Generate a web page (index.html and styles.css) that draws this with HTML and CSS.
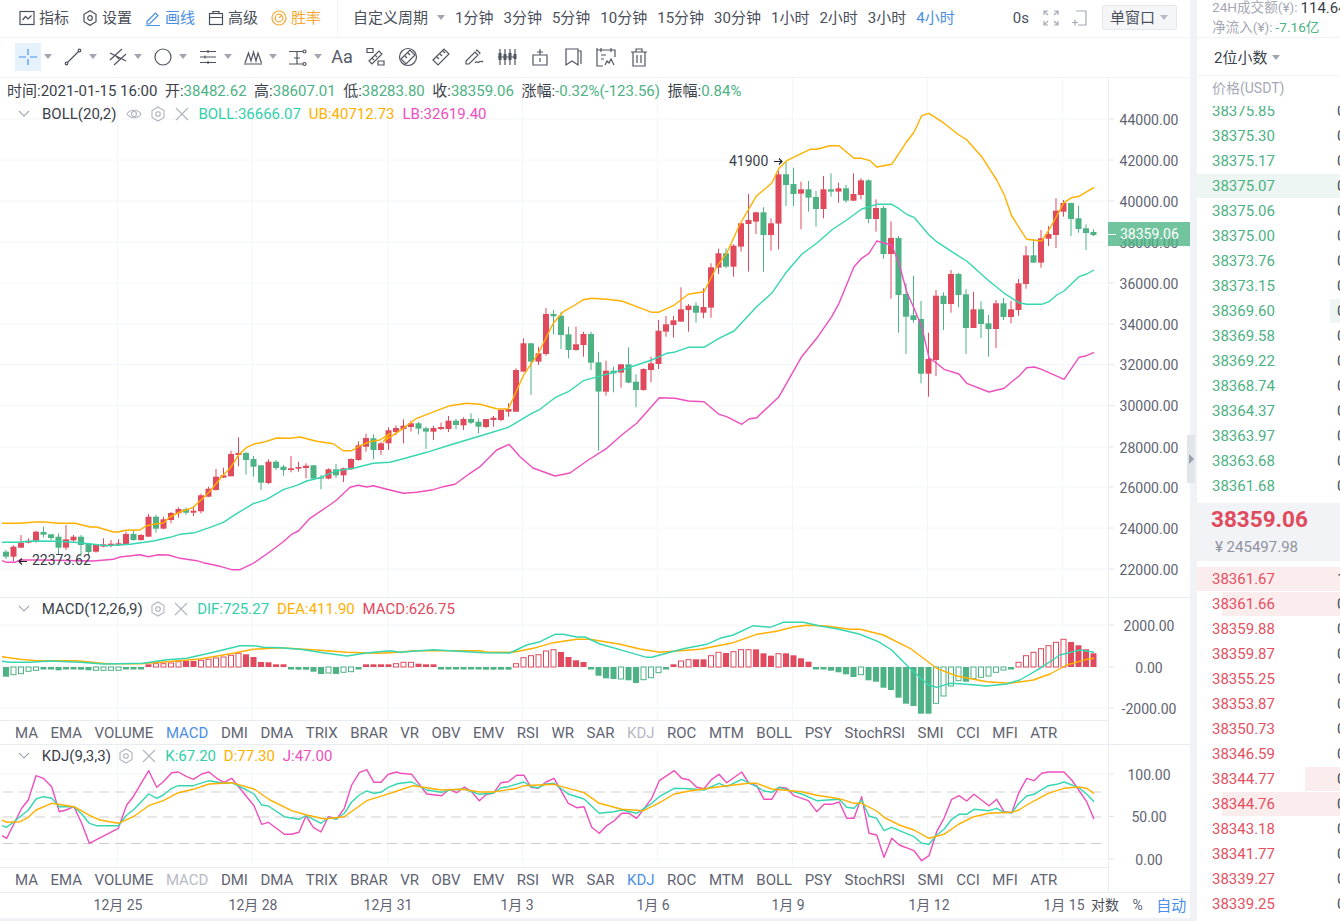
FILE: index.html
```html
<!DOCTYPE html>
<html lang="zh">
<head>
<meta charset="utf-8">
<title>K线</title>
<link rel="stylesheet" href="styles.css">
</head>
<body>
<div class="app">
  <div class="main">
    <div class="bar-top">
      <div class="bar-tools">
        <div class="tb-item"><svg class="ico" viewBox="0 0 16 16"><rect x="1" y="1.500" width="14" height="13"/><path d="M3.500 10l3-3.500 2.500 2.500 3.500-3.500"/></svg>指标</div>
        <div class="tb-item"><svg class="ico" viewBox="0 0 16 16"><path d="M8 .8l6 3.500v7.400l-6 3.500-6-3.500V4.300z"/><circle cx="8" cy="8" r="2.300"/></svg>设置</div>
        <div class="tb-item blue"><svg class="ico" viewBox="0 0 16 16"><path d="M2 11.500L10.500 3l2.500 2.500L4.500 14H2zM1 15.500h14"/></svg>画线</div>
        <div class="tb-item"><svg class="ico" viewBox="0 0 16 16"><rect x="1.500" y="3.500" width="13" height="11"/><path d="M1.500 7.500h13M5 3.500V1.500h6v2"/></svg>高级</div>
        <div class="tb-item orange"><svg class="ico" viewBox="0 0 16 16"><circle cx="8" cy="8" r="7"/><circle cx="8" cy="8" r="3.800"/><path d="M8 8l3-3"/></svg>胜率</div>
      </div>
      <div class="bar-periods">
        <div class="period-custom">自定义周期<i class="caret"></i></div>
        <span>1分钟</span><span>3分钟</span><span>5分钟</span><span>10分钟</span><span>15分钟</span><span>30分钟</span><span>1小时</span><span>2小时</span><span>3小时</span><span class="blue">4小时</span>
      </div>
      <div class="bar-right">
        <span class="clock">0s</span>
        <svg class="ico ico-gray" viewBox="0 0 16 16"><path d="M1 5V1h4M11 1h4v4M15 11v4h-4M5 15H1v-4M1 1l4 4M15 1l-4 4M15 15l-4-4M1 15l4-4"/></svg>
        <svg class="ico ico-gray" viewBox="0 0 16 16"><path d="M5 1h10v14H7M1 12.500h6M4 9.500v6"/></svg>
        <div class="window-btn">单窗口<i class="caret caret-light"></i></div>
      </div>
    </div>
    <div class="bar-draw">
      <div class="tool-group"><span class="tool tool-on"><svg class="ico ico-big" viewBox="0 0 20 20"><path d="M10 2v6M10 12v6M1 10h7M12 10h7"/></svg></span><i class="caret"></i></div>
      <div class="tool-group"><span class="tool"><svg class="ico ico-big" viewBox="0 0 20 20"><path d="M4.500 15.500l11-11"/><circle cx="3.500" cy="16.500" r="1.300"/><circle cx="16.500" cy="3.500" r="1.300"/></svg></span><i class="caret"></i></div>
      <div class="tool-group"><span class="tool"><svg class="ico ico-big" viewBox="0 0 20 20"><path d="M2 13L14 2M6 18L18 7M2 6l16 8M7 8l4 4"/></svg></span><i class="caret"></i></div>
      <div class="tool-group"><span class="tool"><svg class="ico ico-big" viewBox="0 0 20 20"><circle cx="10" cy="10" r="8"/></svg></span><i class="caret"></i></div>
      <div class="tool-group"><span class="tool"><svg class="ico ico-big" viewBox="0 0 20 20"><path d="M2 4.500h16M2 10h16M2 15.500h16M10 3v3M7 8.500v3M10 14v3"/></svg></span><i class="caret"></i></div>
      <div class="tool-group"><span class="tool"><svg class="ico ico-big" viewBox="0 0 20 20"><path d="M1 17h18M2 16L5.500 6 8 14l2.500-9 2.500 9L15 6l3.500 10"/></svg></span><i class="caret"></i></div>
      <div class="tool-group tool-group-last"><span class="tool"><svg class="ico ico-big" viewBox="0 0 20 20"><path d="M1 4.500h14M1 17h14M9 4.500V17M6 11h6"/><circle cx="16.500" cy="4.500" r="1.500"/><circle cx="16.500" cy="17" r="1.500"/></svg></span><i class="caret"></i></div>
      <span class="tool-single tool-text">Aa</span>
      <span class="tool-single"><svg class="ico ico-big" viewBox="0 0 20 20"><path d="M2 1.500h6v4H2zM13 14h6v4h-6zM4 14l10-10 3 3L7 17zM7 11l2 2M10 8l2 2"/></svg></span>
      <span class="tool-single"><svg class="ico ico-big" viewBox="0 0 20 20"><path d="M3 12L12 3l5 5-9 9zM7 9l2 2M10 6l2 2"/><circle cx="10" cy="10" r="8.500"/></svg></span>
      <span class="tool-single"><svg class="ico ico-big" viewBox="0 0 20 20"><path d="M2 13L13 2l5 5L7 18zM6 10l2 2M9 7l2 2M12 4l2 2"/></svg></span>
      <span class="tool-single"><svg class="ico ico-big" viewBox="0 0 20 20"><path d="M2 17v-3L11 5l3 3-9 9zM12 4l1-1 3 3-1 1M11 16c2-3 3 1 4-1s2 1 4-1"/></svg></span>
      <span class="tool-single"><svg class="ico ico-big" viewBox="0 0 20 20"><path d="M3 2v16M8 2v16M13 2v16M18 2v16M1 10h18"/><path class="ico-fill" d="M1.500 6h3v7h-3zM6.500 7h3v6h-3zM11.500 6h3v7h-3zM16.500 7h3v5h-3z"/></svg></span>
      <span class="tool-single"><svg class="ico ico-big" viewBox="0 0 20 20"><path d="M3 8h14v10H3zM10 8V2M7 5h6M10 11v4"/></svg></span>
      <span class="tool-single"><svg class="ico ico-big" viewBox="0 0 20 20"><path d="M3 2h12v16l-6-4-6 4zM15 4h3v13"/></svg></span>
      <span class="tool-single"><svg class="ico ico-big" viewBox="0 0 20 20"><path d="M1 1v18h6M1 3h18v7M5 1v4M15 1v4M5 8h5M5 12h3M9 18l2-4 2 2 2-4 3 6"/></svg></span>
      <span class="tool-single"><svg class="ico ico-big" viewBox="0 0 20 20"><path d="M2 5h16M7 5V2h6v3M4 5v14h12V5M8 8v8M12 8v8"/></svg></span>
    </div>

    <div class="pane pane-main">
      <div class="plot">
        <svg id="main-plot" class="chart-svg" width="1108" height="519" viewBox="0 78 1108 519"></svg>
        <div class="legend">
          <div class="info">
            <span>时间:2021-01-15 16:00</span>
            <span>开:<b>38482.62</b></span>
            <span>高:<b>38607.01</b></span>
            <span>低:<b>38283.80</b></span>
            <span>收:<b>38359.06</b></span>
            <span>涨幅:<b>-0.32%(-123.56)</b></span>
            <span>振幅:<b>0.84%</b></span>
          </div>
          <div class="ind">
            <svg class="chev" viewBox="0 0 12 8"><path d="M1 1l5 5 5-5"/></svg>
            <span class="ind-name">BOLL(20,2)</span>
            <svg class="mini" viewBox="0 0 16 16"><path d="M1 8c3-5 11-5 14 0-3 5-11 5-14 0z"/><circle cx="8" cy="8" r="2.500"/></svg>
            <svg class="mini" viewBox="0 0 16 16"><path d="M8 1l6 3.500v7L8 15l-6-3.500v-7z"/><circle cx="8" cy="8" r="2.300"/></svg>
            <svg class="mini" viewBox="0 0 16 16"><path d="M2 2l12 12M14 2L2 14"/></svg>
            <span class="teal">BOLL:36666.07</span><span class="amber">UB:40712.73</span><span class="pink">LB:32619.40</span>
          </div>
        </div>
      </div>
      <div class="axis">
        <svg id="main-axis" class="chart-svg" width="81" height="519" viewBox="1109 78 81 519"></svg>
        <div class="price-tag"><i class="tag-dash"></i>38359.06</div>
      </div>
    </div>

    <div class="pane pane-sub">
      <div class="plot">
        <svg id="macd-plot" class="chart-svg plot-sub" width="1108" height="122" viewBox="0 598 1108 122"></svg>
        <div class="legend legend-sub">
          <div class="ind">
            <svg class="chev" viewBox="0 0 12 8"><path d="M1 1l5 5 5-5"/></svg>
            <span class="ind-name">MACD(12,26,9)</span>
            <svg class="mini" viewBox="0 0 16 16"><path d="M8 1l6 3.500v7L8 15l-6-3.500v-7z"/><circle cx="8" cy="8" r="2.300"/></svg>
            <svg class="mini" viewBox="0 0 16 16"><path d="M2 2l12 12M14 2L2 14"/></svg>
            <span class="teal">DIF:725.27</span><span class="amber">DEA:411.90</span><span class="red">MACD:626.75</span>
          </div>
        </div>
        <div class="tabs">
          <span>MA</span><span>EMA</span><span>VOLUME</span><span class="blue">MACD</span><span>DMI</span><span>DMA</span><span>TRIX</span><span>BRAR</span><span>VR</span><span>OBV</span><span>EMV</span><span>RSI</span><span>WR</span><span>SAR</span><span class="dim">KDJ</span><span>ROC</span><span>MTM</span><span>BOLL</span><span>PSY</span><span>StochRSI</span><span>SMI</span><span>CCI</span><span>MFI</span><span>ATR</span>
        </div>
      </div>
      <div class="axis">
        <svg id="macd-axis" class="chart-svg" width="81" height="122" viewBox="1109 598 81 122"></svg>
      </div>
    </div>

    <div class="pane pane-sub pane-kdj">
      <div class="plot">
        <svg id="kdj-plot" class="chart-svg plot-sub" width="1108" height="122" viewBox="0 745 1108 122"></svg>
        <div class="legend legend-sub">
          <div class="ind">
            <svg class="chev" viewBox="0 0 12 8"><path d="M1 1l5 5 5-5"/></svg>
            <span class="ind-name">KDJ(9,3,3)</span>
            <svg class="mini" viewBox="0 0 16 16"><path d="M8 1l6 3.500v7L8 15l-6-3.500v-7z"/><circle cx="8" cy="8" r="2.300"/></svg>
            <svg class="mini" viewBox="0 0 16 16"><path d="M2 2l12 12M14 2L2 14"/></svg>
            <span class="teal">K:67.20</span><span class="amber">D:77.30</span><span class="pink">J:47.00</span>
          </div>
        </div>
        <div class="tabs">
          <span>MA</span><span>EMA</span><span>VOLUME</span><span class="dim">MACD</span><span>DMI</span><span>DMA</span><span>TRIX</span><span>BRAR</span><span>VR</span><span>OBV</span><span>EMV</span><span>RSI</span><span>WR</span><span>SAR</span><span class="blue">KDJ</span><span>ROC</span><span>MTM</span><span>BOLL</span><span>PSY</span><span>StochRSI</span><span>SMI</span><span>CCI</span><span>MFI</span><span>ATR</span>
        </div>
      </div>
      <div class="axis">
        <svg id="kdj-axis" class="chart-svg" width="81" height="122" viewBox="1109 745 81 122"></svg>
      </div>
    </div>

    <div class="time-axis">
      <svg class="time-svg" width="1085" height="25" viewBox="0 0 1085 25">
        <text x="118" y="17">12月 25</text>
        <text x="253" y="17">12月 28</text>
        <text x="388" y="17">12月 31</text>
        <text x="517" y="17">1月 3</text>
        <text x="653" y="17">1月 6</text>
        <text x="788" y="17">1月 9</text>
        <text x="929" y="17">1月 12</text>
        <text x="1064" y="17">1月 15</text>
      </svg>
      <div class="time-ctrl"><span class="ctrl-dark">对数</span><span>%</span><span class="blue">自动</span></div>
    </div>
  </div>

  <div class="gutter"></div>

  <div class="side">
    <div class="stats">
      <div class="stat"><span class="stat-label">24H成交额(¥):</span><span class="stat-val">114.64亿</span></div>
      <div class="stat"><span class="stat-label">净流入(¥):</span><span class="up">-7.16亿</span></div>
    </div>
    <div class="precision">2位小数<i class="caret"></i></div>
    <div class="book-head">价格(USDT)</div>
    <div class="book book-buy">
      <div class="row up"><span>38375.85</span><span>0.1284</span></div>
      <div class="row up"><span>38375.30</span><span>0.0210</span></div>
      <div class="row up"><span>38375.17</span><span>0.0030</span></div>
      <div class="row up depth-g"><span>38375.07</span><span>0.5220</span></div>
      <div class="row up"><span>38375.06</span><span>0.0412</span></div>
      <div class="row up"><span>38375.00</span><span>0.0100</span></div>
      <div class="row up"><span>38373.76</span><span>0.2605</span></div>
      <div class="row up"><span>38373.15</span><span>0.0088</span></div>
      <div class="row up depth-g depth-tail"><span>38369.60</span><span>0.0150</span></div>
      <div class="row up"><span>38369.58</span><span>0.0322</span></div>
      <div class="row up"><span>38369.22</span><span>0.0401</span></div>
      <div class="row up"><span>38368.74</span><span>0.1173</span></div>
      <div class="row up"><span>38364.37</span><span>0.0057</span></div>
      <div class="row up"><span>38363.97</span><span>0.0263</span></div>
      <div class="row up"><span>38363.68</span><span>0.0094</span></div>
      <div class="row up"><span>38361.68</span><span>0.0315</span></div>
    </div>
    <div class="last">
      <div class="last-price">38359.06</div>
      <div class="last-cny">¥ 245497.98</div>
    </div>
    <div class="book book-sell">
      <div class="row down depth-r"><span>38361.67</span><span>1.2056</span></div>
      <div class="row down depth-r depth-118"><span>38361.66</span><span>0.9871</span></div>
      <div class="row down"><span>38359.88</span><span>0.0540</span></div>
      <div class="row down"><span>38359.87</span><span>0.0265</span></div>
      <div class="row down"><span>38355.25</span><span>0.0103</span></div>
      <div class="row down"><span>38353.87</span><span>0.0731</span></div>
      <div class="row down"><span>38350.73</span><span>0.0422</span></div>
      <div class="row down"><span>38346.59</span><span>0.0180</span></div>
      <div class="row down depth-r depth-35"><span>38344.77</span><span>0.3012</span></div>
      <div class="row down depth-r depth-118"><span>38344.76</span><span>0.9006</span></div>
      <div class="row down"><span>38343.18</span><span>0.0611</span></div>
      <div class="row down"><span>38341.77</span><span>0.0075</span></div>
      <div class="row down"><span>38339.27</span><span>0.0342</span></div>
      <div class="row down"><span>38339.25</span><span>0.0126</span></div>
    </div>
  </div>
  <div class="handle"><i></i></div>
</div>
<script src="chart.js"></script>
</body>
</html>
```
FILE: styles.css
```css
* { box-sizing: border-box; }
html, body { margin: 0; padding: 0; }
body {
  width: 1340px; height: 921px; overflow: hidden;
  background: #f0f2f6; color: #3a3f4b;
  font: 15px/1.2 Roboto, "Noto Sans CJK SC", sans-serif;
}
.app { display: flex; height: 921px; position: relative; }
.main { width: 1190px; height: 918px; background: #fff; display: flex; flex-direction: column; }
.gutter { width: 7px; }
.side { width: 143px; height: 921px; background: #fff; overflow: hidden; display: flex; flex-direction: column; }
.blue { color: #4a8fe7; }
.orange { color: #f7a935; }
.dim { color: #b6bac4; }

/* top bars */
.bar-top { height: 38px; flex: none; display: flex; align-items: center; border-bottom: 1px solid #f1f3f6; }
.bar-tools { width: 338px; height: 100%; padding: 0 0 2px 19px; display: flex; align-items: center; gap: 13px; border-right: 1px solid #f1f3f6; }
.tb-item { display: flex; align-items: center; gap: 4px; color: #4a4f5b; }
.tb-item.blue { color: #4a8fe7; }
.tb-item.orange { color: #f7a935; }
.ico { width: 16px; height: 16px; flex: none; fill: none; stroke: currentColor; stroke-width: 1.2; }
.ico-gray { color: #a5aab5; }
.ico-big { width: 20px; height: 20px; color: #4f5460; stroke-width: 1.2; }
.ico-fill { fill: #4f5460; stroke: none; }
.bar-periods { padding: 0 0 2px 15px; display: flex; align-items: center; gap: 10px; color: #4a4f5b; }
.period-custom { display: flex; align-items: center; gap: 9px; }
.caret { display: inline-block; width: 0; height: 0; border: 4.5px solid transparent; border-top: 5px solid #a1a6b1; border-bottom: 0; }
.caret-light { border-top-color: #b6bac4; }
.bar-right { margin-left: auto; padding: 0 13px 2px 0; display: flex; align-items: center; gap: 12px; color: #4a4f5b; }
.clock { margin-right: 2px; }
.window-btn { width: 75px; height: 25px; margin-left: 3px; padding-left: 7px; display: flex; align-items: center; gap: 5px; background: #f5f6f8; border: 1px solid #e4e7ec; border-radius: 2px; }

.bar-draw { height: 40px; flex: none; padding: 0 0 2px 14.5px; display: flex; align-items: center; border-bottom: 1px solid #f1f3f6; }
.tool-group { width: 45px; display: flex; align-items: center; gap: 3px; }
.tool-group-last { width: 41px; }
.tool { width: 26px; height: 28px; display: flex; align-items: center; justify-content: center; }
.tool-on { background: #e5f2fc; }
.tool-on .ico { color: #3f95e8; }
.tool-single { width: 33px; display: flex; align-items: center; justify-content: center; }
.tool-text { font-size: 18px; color: #555a66; }

/* chart panes */
.pane { display: flex; flex: none; border-bottom: 1px solid #e9ecf0; }
.pane-main { height: 520px; }
.pane-sub { height: 147px; }
.pane-kdj { height: 148px; }
.plot { width: 1109px; position: relative; border-right: 1px solid #e9ecf0; }
.axis { width: 81px; position: relative; }
.chart-svg { display: block; }
.plot-sub { border-bottom: 1px solid #e9ecf0; box-sizing: content-box; }
.grid { stroke: #f3f6fa; stroke-width: 1; }
.tick { stroke: #e1e4ea; stroke-width: 1; }
.axis-label { font: 14px Roboto, sans-serif; fill: #5f6472; text-anchor: middle; }
.wick-up { stroke: #e14a5c; stroke-width: 1; }
.wick-down { stroke: #4db284; stroke-width: 1; }
.body-up { fill: #e14a5c; }
.body-down { fill: #4db284; }
.hollow-up { fill: #fff; stroke: #e14a5c; stroke-width: 1; }
.hollow-down { fill: #fff; stroke: #4db284; stroke-width: 1; }
.line { fill: none; stroke-linejoin: round; stroke-width: 1.4; }
.line-amber { stroke: #ffb000; }
.line-teal { stroke: #35d6b1; }
.line-pink { stroke: #ee4fbd; }
.dash { stroke: #cfcfcf; stroke-width: 1; stroke-dasharray: 10 6; }
.mark-text { font: 14px Roboto, sans-serif; fill: #3a3f4b; }
.mark-arrow { stroke: #222; stroke-width: 1.2; fill: none; }

.legend { position: absolute; left: 0; top: 0; right: 0; }
.legend-sub { top: -1px; }
.info { height: 24px; padding: 1px 0 0 7px; display: flex; align-items: center; gap: 7.5px; color: #3a3f4b; }
.info b { font-weight: 400; color: #4db284; }
.ind { height: 23px; padding-left: 18px; display: flex; align-items: center; gap: 8px; color: #3a3f4b; }
.chev { width: 12px; height: 8px; margin-right: 4px; fill: none; stroke: #a5aab5; stroke-width: 1.1; }
.ind-name { margin-right: 2px; }
.legend-sub .ind-name { margin-right: -1px; }
.legend-sub .ind { gap: 7.8px; }
.mini { width: 16px; height: 16px; flex: none; fill: none; stroke: #b0b4be; stroke-width: 1.1; }
.teal { color: #31cfa9; }
.amber { color: #ffb000; }
.pink { color: #ee4fbd; }
.red { color: #e14a5c; }

.tabs { height: 24px; padding-left: 15px; display: flex; align-items: center; gap: 12.5px; color: #5f6472; }
.pane-kdj .tabs { height: 25px; padding-bottom: 2px; }

.price-tag { position: absolute; left: -1px; top: 144px; width: 82px; height: 24px; display: flex; align-items: center; gap: 4px; background: rgba(78, 181, 134, .8); color: #fff; font-size: 14px; }
.tag-dash { width: 8px; height: 1px; background: #fff; }

.time-axis { height: 25px; flex: none; display: flex; align-items: center; font-size: 14px; color: #5f6472; }
.time-svg { flex: none; }
.time-svg text { font: 14px Roboto, "Noto Sans CJK SC", sans-serif; fill: #5f6472; text-anchor: middle; }
.time-ctrl { padding-left: 6px; display: flex; gap: 13.5px; align-items: center; }
.ctrl-dark { color: #4a4f5b; }
.time-ctrl .blue { font-size: 15px; }

.handle { position: absolute; left: 1187px; top: 435px; width: 8px; height: 48px; background: #e2e5ea; display: flex; align-items: center; justify-content: center; }
.handle i { width: 0; height: 0; border: 5px solid transparent; border-left: 5px solid #98a0ad; border-right: 0; }

/* order book */
.stats { height: 38px; flex: none; padding-left: 15px; border-bottom: 1px solid #f1f3f6; }
.stat { height: 19px; margin: -2px 0 3px; display: flex; align-items: center; gap: 3px; white-space: nowrap; font-size: 13.6px; color: #3a3f4b; }
.stat-label { color: #a5a9b5; }
.stat-val { font-size: 15px; }
.up { color: #4db284; }
.down { color: #e5505f; }
.precision { height: 38px; flex: none; padding: 2px 0 0 17px; display: flex; align-items: center; gap: 5px; border-bottom: 1px solid #f1f3f6; color: #3a3f4b; font-size: 15px; }
.book-head { height: 30px; flex: none; padding: 0 0 6px 15px; font-size: 14px; color: #a5a9b5; display: flex; align-items: center; }
.book { flex: none; overflow: hidden; }
.book-buy { height: 397px; }
.book-buy .row:first-child { margin-top: -7px; }
.book-sell { margin-top: 6px; }
.row { height: 25px; padding-left: 15px; display: flex; align-items: center; white-space: nowrap; border-bottom: 1px solid #fff; }
.row span:first-child { width: 125px; flex: none; }
.row span:last-child { color: #4a4f5b; }
.depth-g { background: linear-gradient(#edf6f2, #edf6f2) right / 100% 100% no-repeat; }
.depth-r { background: linear-gradient(#fbecee, #fbecee) right / 100% 100% no-repeat; }
.depth-tail { background-size: 10px 100%; }
.depth-118 { background-size: 118px 100%; }
.depth-35 { background-size: 35px 100%; }
.last { height: 58px; flex: none; padding: 1px 0 0 14px; background: #f2f3f6; }
.last-price { font-size: 22.5px; font-weight: 700; color: #e14a5c; line-height: 30px; }
.last-cny { padding: 2px 0 0 4px; font-size: 15px; color: #9094a0; line-height: 22px; }
```
FILE: chart.js
```js
(function () {
  var NS = 'http://www.w3.org/2000/svg';
  function add(svg, tag, attrs, text) {
    var el = document.createElementNS(NS, tag);
    for (var k in attrs) el.setAttribute(k, attrs[k]);
    if (text != null) el.textContent = text;
    svg.appendChild(el);
    return el;
  }
  function Z(dx, dy, s) {
    var n = s.trim().split(/[\s,]+/).map(Number), out = [];
    for (var i = 0; i < n.length; i += 2) out.push([dx + n[i] / 3, dy + n[i + 1] / 3]);
    return out;
  }
  function poly(svg, cls, pts) {
    add(svg, 'polyline', { 'class': 'line ' + cls, points: pts.map(function (p) { return p[0].toFixed(1) + ',' + p[1].toFixed(1); }).join(' ') });
  }
  var X = function (i) { return 6 + 7.5 * i; };
  var VX = [117.5, 252.5, 387.5, 522.5, 657.5, 792.5, 927.5, 1062.5];

  function grid(svg, ys, top, bottom) {
    VX.forEach(function (x) { add(svg, 'line', { 'class': 'grid', x1: x, x2: x, y1: top, y2: bottom }); });
    ys.forEach(function (y) { add(svg, 'line', { 'class': 'grid', x1: 0, x2: 1108, y1: y, y2: y }); });
  }
  function axis(svg, items) {
    items.forEach(function (it) {
      add(svg, 'line', { 'class': 'tick', x1: 1109, x2: 1114, y1: it[0], y2: it[0] });
      add(svg, 'text', { 'class': 'axis-label', x: 1149, y: it[0] + 5.5 }, it[1]);
    });
  }

  /* candles: [up?, bodyTop, bodyBottom, wickTop, wickBottom] in crop coordinates */
  var A = [[0,455,470,450,477],[1,440,470,436,484],[1,428,443,405,443],[1,422,428,415,430],[1,395,422,392,428],[0,396,404,380,412],[0,403,414,403,420],[0,410,443,400,465],[1,418,443,375,450],[1,410,421,405,425],[0,410,435,405,468],[0,431,456,431,465],[1,435,455,432,458],[1,433,440,415,442],[1,431,437,420,442],[1,430,436,418,438],[1,402,432,395,432],[0,402,420,393,422],[1,405,420,402,422],[1,350,410,342,410],[0,350,386,344,398],[1,358,386,350,388],[1,339,360,336,370],[1,327,340,322,353],[0,327,338,322,344],[1,332,338,318,348],[1,286,334,281,340],[1,266,290,260,290],[1,230,270,207,272],[1,226,233,203,234],[1,162,229,152,229],[1,159,165,112,199],[0,159,180,155,224],[0,177,200,168,230],[0,196,248,196,270],[1,185,249,178,252],[0,185,204,180,210],[0,200,210,195,227],[1,205,210,168,217],[1,201,206,185,215],[1,197,204,190,235],[0,196,236,195,238],[0,232,236,225,268],[1,208,236,205,238],[0,208,226,192,234],[1,205,226,203,246],[1,177,208,175,210],[1,136,180,124,182],[1,114,140,101,155],[0,115,150,103,178],[1,130,150,126,165],[1,91,130,82,150],[1,84,96,76,105],
    [1,77,87,58,130],[1,70,81,62,95],[0,70,86,66,103],[0,85,95,80,147],[1,84,95,78,120],[1,81,87,68,90],[1,62,87,48,96],[0,62,75,57,88],[1,57,76,52,90],[0,57,68,40,72],[0,65,80,55,100],[1,57,81,57,84],[1,53,60,48,80],[1,30,60,28,64],[1,27,35,10,50]];
  var C = [[1,720,845,715,845],[1,640,725,625,725],[0,640,695,640,795],[1,670,695,650,705],[1,552,672,534,677],[0,552,559,540,613],[0,557,615,545,657],[0,613,660,590,685],[1,643,660,590,662],[1,612,645,605,680],[0,612,698,605,720],[0,697,785,667,962],[1,722,785,692,797],[0,722,730,710,787],[1,703,728,703,773],[0,703,758,652,760],[0,755,780,733,832],[1,717,780,715,782],[1,700,720,680,757],[1,602,702,570,717],[1,583,605,558,620],[1,571,585,558,623],[1,538,575,472,575],[1,527,540,522,605],[0,527,548,517,578],[1,531,548,475,565],[1,412,533,400,563],[1,370,413,356,432],[0,370,410,355,415],[1,347,410,343,440],[1,280,350,280,365],[1,270,282,192,425],[1,247,275,245,312],[0,247,315,232,425],[1,280,315,265,362],[1,133,281,122,358],[0,133,165,95,228],[0,162,192,113,228],[1,178,191,155,298],[0,178,203,153,245],[0,201,237,183,290],[1,178,237,138,265],[0,178,185,130,200],[1,175,185,158,218],[0,175,212,165,218]];
  var D = [[1,282,302,220,302],[1,241,285,235,298],[0,241,357,238,370],[1,324,357,298,395],[0,324,462,318,476],[1,414,462,364,596],[0,414,585,408,698],[0,582,650,550,762],[0,646,660,527,668],[0,657,821,603,850],[1,777,821,698,890],[1,587,780,570,828],[0,587,612,577,690],[1,522,612,510,638],[0,522,585,519,622],[0,583,684,568,762],[1,628,684,576,684],[0,628,672,604,714],[0,670,687,645,770],[1,610,687,600,744],[0,610,651,594,660],[1,628,651,602,670],[1,550,630,537,647],[1,466,552,438,566],[0,466,488,418,488],[1,415,488,390,503],[1,402,416,378,438],[1,332,405,295,444],[1,309,335,300,350],[0,309,357,308,408],[0,355,387,318,398],[0,385,399,373,450],[0,396,405,388,408]];
  function toY(c, dy) { return [c[0], dy + c[1] / 3, dy + c[2] / 3, dy + c[3] / 3, dy + c[4] / 3]; }
  var candles = A.map(function (c) { return toY(c, 400); })
    .concat(C.map(function (c) { return toY(c, 130); }))
    .concat(D.map(function (c) { return toY(c, 100); }));

  var mainPlot = document.getElementById('main-plot');
  var priceYs = [119, 160, 201, 242, 283, 324, 364.5, 405.5, 447, 487, 528, 569];
  grid(mainPlot, priceYs, 78, 597);
  candles.forEach(function (c, i) {
    var x = X(i), up = c[0] === 1;
    add(mainPlot, 'line', { 'class': up ? 'wick-up' : 'wick-down', x1: x, x2: x, y1: c[3].toFixed(1), y2: c[4].toFixed(1) });
    add(mainPlot, 'rect', { 'class': up ? 'body-up' : 'body-down', x: x - 3, y: c[1].toFixed(1), width: 6, height: Math.max(1, c[2] - c[1]).toFixed(1) });
  });
  var ub = Z(0, 400, '6,370 60,370 105,366 135,366 175,370 225,370 270,381 290,381 340,396 355,396 375,391 420,390 440,377 465,372 490,369 510,351 540,336 580,322 600,303 630,274 665,230 690,205 716,165 740,142 765,131 790,127 830,114 870,115 900,111 950,124 1000,131 1030,152 1055,152 1085,135 1110,125 1140,120 1170,100')
    .concat(Z(150, 400, '700,125 760,85 800,55 860,32 900,17 950,10 990,13 1040,26'))
    .concat(Z(500, 130, '0,837 25,837 72,733 115,670 160,580 190,545 225,525 250,509 275,505 320,508 365,513 410,530 455,547 475,547 520,527 565,493 612,485 650,410 680,370 720,282 770,197 815,160 837,115 860,92 930,58 950,58 990,47 1017,47 1062,85 1085,85 1110,92'))
    .concat(Z(850, 100, '80,201 125,193 170,125 192,97 215,47 237,40 280,68 327,105 350,119 395,170 440,240 463,285 485,348 530,418 575,423 597,390 642,308 665,293 687,289 732,262'));
  var mid = Z(0, 400, '6,427 50,427 100,423 175,424 240,428 320,437 390,433 460,423 510,412 540,403 585,398 630,382 670,367 715,338 760,311 800,298 850,269 890,256 920,243 960,233 1010,212 1060,205 1120,190 1170,187')
    .concat(Z(150, 400, '760,176 830,157 900,135 1000,105'))
    .concat(Z(500, 130, '25,892 95,850 120,838 165,803 205,785 250,752 275,745 342,727 410,705 455,690 500,670 522,667 565,652 612,652 657,625 702,603 770,530 815,490 860,425 905,373 950,340 995,300 1040,270 1085,237'))
    .concat(Z(850, 100, '80,313 125,313 147,326 170,343 192,352 237,405 260,425 305,455 350,483 417,543 463,580 507,608 530,613 575,613 597,605 620,585 642,573 687,530 710,522 732,510'));
  var lb = Z(0, 400, '6,482 20,487 45,487 60,480 120,480 280,483 340,478 360,471 420,464 445,470 475,464 505,465 540,475 590,482 610,488 660,499 695,509 720,509 760,490 810,455 850,425 875,403 895,393 930,355 985,318 1010,300 1050,262 1075,256 1100,261 1120,257 1170,270')
    .concat(Z(150, 400, '760,280 800,277 850,269 880,260 915,253 960,220 990,200 1040,150 1077,133 1110,170'))
    .concat([[533, 468], [555, 476], [570, 473]])
    .concat(Z(500, 130, '265,990 320,955 365,915 410,880 478,803 525,805 565,813 612,815 657,853 680,860 725,883 747,867 770,863 837,800 905,680 950,625 995,560 1017,520 1062,410 1085,385 1107,370'))
    .concat(Z(850, 100, '80,423 125,435 147,490 170,575 192,625 215,680 237,773 260,790 282,808 327,822 350,850 417,876 463,865 485,845 507,828 530,803 553,801 575,808 642,838 687,772 710,767 732,757'));
  poly(mainPlot, 'line-pink', lb);
  poly(mainPlot, 'line-teal', mid);
  poly(mainPlot, 'line-amber', ub);
  add(mainPlot, 'text', { 'class': 'mark-text', x: 729, y: 166 }, '41900');
  add(mainPlot, 'path', { 'class': 'mark-arrow', d: 'M774 161.500h8m-3-3l3 3-3 3' });
  add(mainPlot, 'text', { 'class': 'mark-text', x: 32, y: 565 }, '22373.62');
  add(mainPlot, 'path', { 'class': 'mark-arrow', d: 'M27 561.500h-8m3-3l-3 3 3 3' });
  axis(document.getElementById('main-axis'), priceYs.map(function (y, i) { return [y, (44000 - i * 2000).toFixed(2)]; }));

  /* MACD */
  var macdPlot = document.getElementById('macd-plot');
  grid(macdPlot, [625, 667, 708], 598, 720);
  var m1 = [259,253,250,243,240,236,236,240,237,237,238,240,240,240,240,240,235,235,235,222,220,220,218,214,212,212,210,207,203,200,195,189,192,200,215,216,222,222,235,238,238,244,251,248,251,246,244,236,222,222,222,222,220,216,216,220,222,222,235,235,235,235,237,237,238,238,238,238,220,202,196,193,182,178,185,200,210,215,235,256,264,266,266,270,278,268,262,247,235,222,212,208,207,207,196,186,188,184,178,178,177,189,196,190,189,195,204,214,235,236,241,246,252,260];
  var m2 = [224,241,245,263,270,293,311,318,341,341,310,288,258,242,245,236,232,228,217,210,203,187,167,157,146,137,127,118,126,136,148,160];
  var vals = m1.map(function (z) { return (230 - z) / 3; }).concat(m2.map(function (z) { return (201 - z) / 3; }));
  var hollow = {};
  [1,2,3,4,12,13,14,15,20,21,22,23,26,27,28,29,30,31,43,45,46,52,53,54,68,69,70,71,72,73,82,85,86,87,90,91,94,95,97,98,99,103,114,124,125,126,127,129,130,131,132,133,135,136,137,138,139,140,141].forEach(function (i) { hollow[i] = 1; });
  var Y0 = 667;
  vals.forEach(function (v, i) {
    var up = v > 0, h = Math.max(2.5, Math.abs(v)), x = X(i);
    var top = up ? Y0 - h : Y0;
    if (hollow[i]) {
      add(macdPlot, 'rect', { 'class': up ? 'hollow-up' : 'hollow-down', x: x - 2.5, y: top.toFixed(1), width: 5, height: h.toFixed(1) });
    } else {
      add(macdPlot, 'rect', { 'class': up ? 'body-up' : 'body-down', x: x - 3, y: top.toFixed(1), width: 6, height: h.toFixed(1) });
    }
  });
  var dif = Z(0, 590, '6,214 30,217 90,217 150,213 240,217 310,222 430,220 500,209 560,205 640,187 720,167 760,167 790,172 840,173 900,178 960,187 1040,198 1100,189 1170,182')
    .concat(Z(400, 590, '0,187 100,179 250,188 330,189 380,165 420,155 465,133 490,133 530,141 555,141 600,162 670,182 740,202 755,202 850,176 920,163 960,145 1000,135 1060,107 1110,112 1150,97 1210,97 1260,108 1310,116 1380,133'))
    .concat(Z(840, 600, '65,105 115,125 155,150 205,200 265,255 290,262 330,250 370,252 440,258 500,252 540,240 600,205 660,165 720,150 762,157'));
  var dea = Z(0, 590, '6,200 60,208 110,212 230,212 320,221 420,221 500,215 600,207 700,190 760,178 840,173 950,180 1040,187 1130,190')
    .concat(Z(400, 590, '0,187 40,182 240,182 260,187 340,187 400,175 460,158 530,148 570,148 660,163 720,177 780,187 900,178 1000,158 1070,133 1130,124 1180,111 1220,106 1280,108 1350,118'))
    .concat(Z(840, 600, '60,88 130,105 210,145 290,205 350,228 440,245 510,250 580,240 630,222 680,195 740,178 762,175'));
  poly(macdPlot, 'line-amber', dea);
  poly(macdPlot, 'line-teal', dif);
  axis(document.getElementById('macd-axis'), [[625, '2000.00'], [667, '0.00'], [708, '-2000.00']]);

  /* KDJ */
  var kdjPlot = document.getElementById('kdj-plot');
  grid(kdjPlot, [774, 859], 745, 867);
  [792, 817, 843.5].forEach(function (y) { add(kdjPlot, 'line', { 'class': 'dash', x1: 3, x2: 1102, y1: y, y2: y }); });
  var kj = Z(0, 590, '6,737 20,745 65,655 85,630 108,557 130,565 155,590 178,665 198,660 222,650 245,700 268,760 355,715 380,645 400,620 446,542 470,592 490,575 515,548 535,546 560,560 580,568 605,552 627,546 650,565 672,577 695,565 740,620 762,647 785,703 805,697 853,733 875,733 897,727 918,677 940,712 963,726 985,680 1010,687 1033,655 1055,585 1078,548 1100,539 1122,577 1143,577 1165,553 1190,546')
    .concat(Z(400, 590, '0,550 35,553 80,612 125,617 148,598 170,608 193,591 215,605 238,632 260,613 280,610 303,578 325,575 350,556 372,556 393,592 415,595 438,576 462,565 505,640 530,653 552,650 575,712 598,730 620,707 642,693 665,670 687,670 710,685 755,625 778,572 823,542 845,565 868,570 890,592 912,596 935,568 957,553 980,578 1025,546 1047,580 1070,587 1092,628 1115,628 1137,592 1160,595 1182,617 1225,632 1250,665 1272,643 1295,643 1318,636 1340,685 1362,685'))
    .concat(Z(840, 600, '65,590 87,700 110,705 132,772 155,715 178,735 222,752 245,782 267,767 290,695 312,655 335,598 357,587 380,603 402,583 447,617 470,598 492,635 515,638 537,577 560,535 582,542 605,520 625,516 672,516 695,540 740,605 762,657'));
  var kk = Z(0, 590, '6,707 20,712 40,697 85,660 108,627 130,620 155,625 178,650 222,650 245,672 268,700 290,707 355,707 380,675 400,660 446,612 470,625 490,615 515,595 535,587 580,587 627,572 672,580 695,578 740,600 762,612 785,645 805,648 853,680 897,688 918,677 940,688 963,700 985,684 1010,687 1033,670 1055,636 1078,615 1100,603 1122,610 1143,607 1165,592 1190,582')
    .concat(Z(400, 590, '0,580 35,576 80,600 125,607 148,600 193,597 238,613 280,610 303,593 325,590 372,576 393,590 415,593 438,582 462,580 505,612 552,627 598,670 642,665 665,660 710,670 755,640 778,620 823,595 868,596 912,600 957,580 980,590 1025,568 1070,590 1092,603 1115,607 1137,592 1205,612 1250,632 1318,628 1340,652 1362,655'))
    .concat(Z(840, 600, '65,600 87,648 110,655 132,692 155,682 222,710 245,730 267,733 290,705 312,688 335,658 357,643 380,643 402,628 447,632 470,625 492,637 515,638 537,610 560,588 582,583 625,557 650,553 672,546 715,562 740,582 762,605'));
  var kd = Z(0, 590, '6,690 20,697 60,695 85,682 108,660 155,640 222,650 270,677 300,690 355,700 400,680 446,647 490,632 535,608 580,598 627,582 695,578 762,597 810,630 875,662 920,675 975,687 1033,680 1100,632 1170,610')
    .concat(Z(400, 590, '0,600 40,587 125,600 190,598 238,606 280,606 350,595 372,587 462,583 552,608 598,640 665,658 730,662 775,640 823,612 868,603 957,590 1047,580 1070,580 1115,597 1205,605 1250,616 1318,626 1362,640'))
    .concat(Z(840, 600, '65,610 110,633 132,652 178,675 222,690 267,715 312,703 357,672 402,650 447,640 515,637 537,630 560,615 625,580 672,565 715,561 740,565 762,580'));
  poly(kdjPlot, 'line-pink', kj);
  poly(kdjPlot, 'line-teal', kk);
  poly(kdjPlot, 'line-amber', kd);
  axis(document.getElementById('kdj-axis'), [[774, '100.00'], [816.5, '50.00'], [859, '0.00']]);
})();
```
